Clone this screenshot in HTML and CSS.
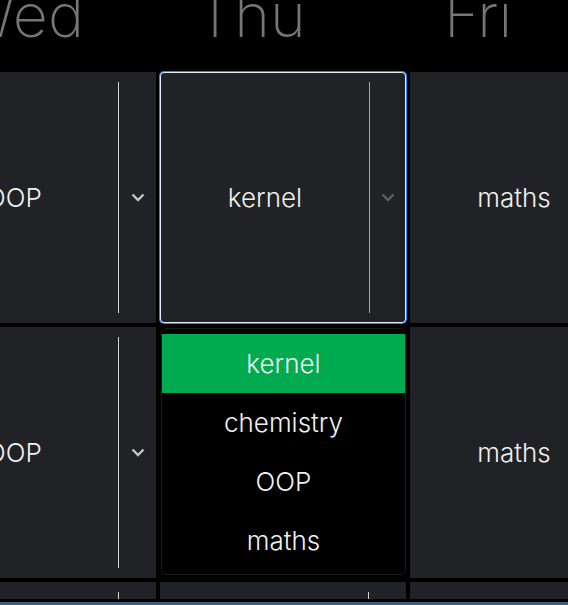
FILE: index.html
```html
<!DOCTYPE html>
<html>
<head>
<meta charset="utf-8">
<link rel="stylesheet" href="styles.css">
</head>
<body>
<div class="page">
  <div class="header">
    <div class="hd hd-wed">Wed</div>
    <div class="hd hd-thu">Thu</div>
    <div class="hd hd-fri">Fri</div>
  </div>
  <div class="grid">
    <div class="row">
      <div class="cell">
        <div class="label">OOP</div><div class="divider"></div>
        <div class="arrow"><svg width="14" height="9" viewBox="0 0 14 9"><path d="M1.5 1.5 L7 7 L12.5 1.5" fill="none" stroke="currentColor" stroke-width="2.4"/></svg></div>
      </div>
      <div class="cell focused">
        <div class="label">kernel</div><div class="divider dim"></div>
        <div class="arrow dim"><svg width="14" height="9" viewBox="0 0 14 9"><path d="M1.5 1.5 L7 7 L12.5 1.5" fill="none" stroke="currentColor" stroke-width="2.4"/></svg></div>
      </div>
      <div class="cell">
        <div class="label">maths</div><div class="divider"></div>
        <div class="arrow"><svg width="14" height="9" viewBox="0 0 14 9"><path d="M1.5 1.5 L7 7 L12.5 1.5" fill="none" stroke="currentColor" stroke-width="2.4"/></svg></div>
      </div>
    </div>
    <div class="row">
      <div class="cell">
        <div class="label">OOP</div><div class="divider"></div>
        <div class="arrow"><svg width="14" height="9" viewBox="0 0 14 9"><path d="M1.5 1.5 L7 7 L12.5 1.5" fill="none" stroke="currentColor" stroke-width="2.4"/></svg></div>
      </div>
      <div class="cell open">
        <ul class="listbox">
          <li class="opt selected">kernel</li>
          <li class="opt">chemistry</li>
          <li class="opt">OOP</li>
          <li class="opt">maths</li>
        </ul>
      </div>
      <div class="cell">
        <div class="label">maths</div><div class="divider"></div>
        <div class="arrow"><svg width="14" height="9" viewBox="0 0 14 9"><path d="M1.5 1.5 L7 7 L12.5 1.5" fill="none" stroke="currentColor" stroke-width="2.4"/></svg></div>
      </div>
    </div>
    <div class="row">
      <div class="cell">
        <div class="label">OOP</div><div class="divider"></div>
        <div class="arrow"></div>
      </div>
      <div class="cell">
        <div class="label">kernel</div><div class="divider"></div>
        <div class="arrow"></div>
      </div>
      <div class="cell">
        <div class="label">maths</div><div class="divider"></div>
        <div class="arrow"></div>
      </div>
    </div>
  </div>
</div>
<div class="bottombar"></div>
</body>
</html>
```
FILE: styles.css
```css
html, body {
  margin: 0;
  padding: 0;
  background: #000;
  overflow: hidden;
  height: 100%;
}
body {
  font-family: Inter, "Noto Sans", sans-serif;
  color: #f0f0f0;
}
.page {
  width: 568px;
  overflow: hidden;
}
.header {
  display: flex;
  height: 72px;
  align-items: flex-start;
}
.hd {
  font-size: 61px;
  font-weight: 250;
  line-height: 31px;
  color: #767676;
  white-space: nowrap;
  flex: none;
}
.hd-wed {
  width: 84px;
  display: flex;
  justify-content: flex-end;
}
.hd-thu {
  margin-left: 112px;
  width: 248px;
}
.hd-fri {
  width: 120px;
}
.grid {
  display: flex;
  flex-direction: column;
  gap: 4px;
  margin-left: -90px;
}
.row {
  display: flex;
  gap: 4px;
  height: 251px;
}
.cell {
  flex: none;
  width: 246px;
  height: 251px;
  box-sizing: border-box;
  background: #212225;
  display: flex;
  align-items: stretch;
}
.label {
  width: 208px;
  display: flex;
  align-items: center;
  justify-content: center;
  font-size: 26px;
  font-weight: 300;
  white-space: nowrap;
}
.divider {
  width: 1px;
  margin: 10px 0;
  background: #d4d4d4;
}
.divider.dim {
  background: #a6a6a6;
}
.arrow {
  flex: 1;
  display: flex;
  align-items: center;
  justify-content: center;
  color: #c4c4c4;
}
.arrow.dim {
  color: #5e5e5e;
}
.cell.focused {
  border: 1px solid #dfeaff;
  border-radius: 4px;
  box-shadow: 0 0 0 1px #2f7fff;
}
.cell.focused .divider {
  margin: 9px 0;
}
.cell.open {
  background: #000;
  padding: 1px 0 3px 1px;
}
.listbox {
  list-style: none;
  margin: 0;
  padding: 5px 0;
  width: 100%;
  box-sizing: border-box;
  background: #000;
  border: 1px solid #1c1c1c;
  border-radius: 6px;
  overflow: hidden;
}
.opt {
  height: 59px;
  display: flex;
  align-items: center;
  justify-content: center;
  font-size: 26px;
  font-weight: 300;
  color: #f0f0f0;
}
.opt.selected {
  background: #00aa4f;
  margin: 0 -1px;
}
.bottombar {
  position: fixed;
  left: 0;
  right: 0;
  bottom: 0;
  height: 3px;
  border-top: 3px solid #000;
  background: #3b5c7d;
}
```
